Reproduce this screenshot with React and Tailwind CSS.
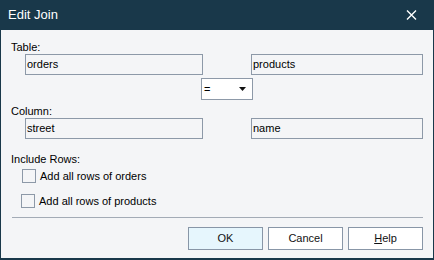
export default function App() {
  const field = 'h-[21px] border border-[#8d99a8] bg-[#f4f5f7] pl-[1px] flex items-center leading-none'
  const btn = 'w-[75px] h-[23px] border border-[#8896a7] flex items-center justify-center text-[#111]'

  return (
    <div
      className="w-[434px] h-[260px] bg-[#19384a] flex flex-col text-[11px] text-black"
      style={{ fontFamily: '"Liberation Sans", Arial, sans-serif' }}
    >
      {/* title bar */}
      <div className="h-[30px] flex items-center pl-[8px] pr-[17px] text-white">
        <span className="text-[13px]">Edit Join</span>
        <svg className="ml-auto" width="11" height="10" viewBox="0 0 11 10">
          <path d="M1 0.5 L10 9.5 M10 0.5 L1 9.5" stroke="#fff" strokeWidth="1.4" fill="none" />
        </svg>
      </div>

      <div className="flex-1 mx-[1px] mb-[2px] bg-[#f4f5f7] pt-[10px] pl-[10px] pr-[10px]">
        <div className="h-[14px] leading-[14px]">Table:</div>
        <div className="flex">
          <div className={`${field} ml-[14px] w-[178px]`}>orders</div>
          <div className={`${field} ml-[48px] w-[172px]`}>products</div>
        </div>

        <div className="mt-[3px] ml-[190px] w-[52px] h-[22px] border border-[#8d99a8] bg-white flex items-center pl-[2px] pr-[6px]">
          <span>=</span>
          <svg className="ml-auto" width="7" height="4" viewBox="0 0 7 4">
            <path d="M0 0 H7 L3.5 4 Z" fill="#111" />
          </svg>
        </div>

        <div className="mt-[4px] h-[14px] leading-[14px]">Column:</div>
        <div className="flex">
          <div className={`${field} ml-[14px] w-[178px]`}>street</div>
          <div className={`${field} ml-[48px] w-[172px]`}>name</div>
        </div>

        <div className="mt-[13px] h-[14px] leading-[14px]">Include Rows:</div>
        <div className="mt-[2px] h-[16px] flex items-center">
          <div className="ml-[11px] w-[14px] h-[14px] border border-[#8d99a8] bg-[#f4f5f7]" />
          <span className="ml-[4px]">Add all rows of orders</span>
        </div>
        <div className="mt-[9px] h-[16px] flex items-center">
          <div className="ml-[10px] w-[14px] h-[14px] border border-[#8d99a8] bg-[#f4f5f7]" />
          <span className="ml-[4px]">Add all rows of products</span>
        </div>

        <div className="mt-[8px] ml-[1px] w-[411px] h-px bg-[#a3abb6]" />

        <div className="mt-[9px] flex justify-end gap-[5px]">
          <div className={`${btn} bg-[#e6f6fd]`}>OK</div>
          <div className={`${btn} bg-white`}>Cancel</div>
          <div className={`${btn} bg-white`}>
            <span><span className="underline">H</span>elp</span>
          </div>
        </div>
      </div>
    </div>
  )
}
